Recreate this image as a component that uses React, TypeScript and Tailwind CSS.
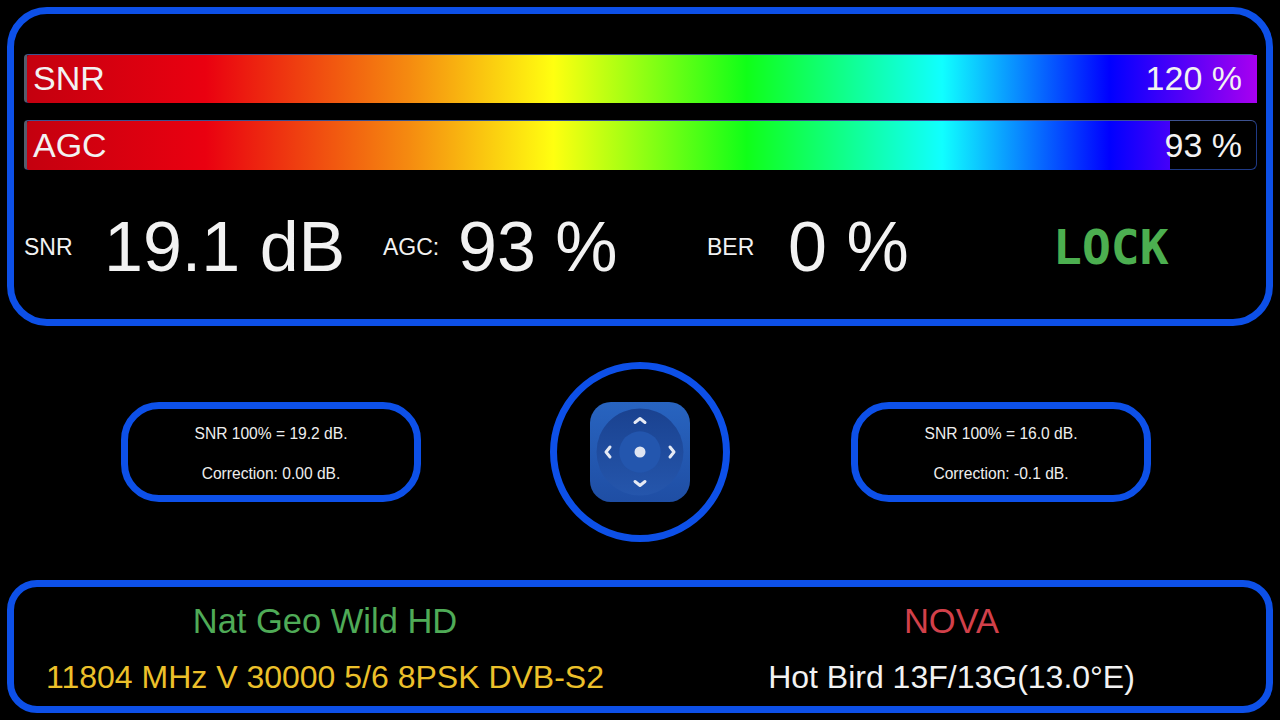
const barGradient =
  'linear-gradient(90deg, #c4000f 0%, #ea0010 14.5%, #f58a10 31%, #ffff10 42.8%, #10ff18 58.5%, #10ffff 74.4%, #0000ff 88%, #a800f0 100%)';

function LevelBar({ label, value, fill }: { label: string; value: string; fill: number }) {
  return (
    <div className={`relative rounded-l-[4px] rounded-r-[6px] border border-[#1f3a86] border-t-[#3d5290] border-l-[3px] border-l-[#555c6c] bg-black ${fill === 100 ? 'h-[49px]' : 'h-[50px]'}`}>
      <div
        className="absolute -bottom-[1px] left-0 top-0 overflow-hidden rounded-l-[2px]"
        style={{ width: `calc(${fill}% + ${fill === 100 ? 1 : 0}px)` }}
      >
        <div className="h-full w-[1230px]" style={{ background: barGradient }} />
      </div>
      <div className="relative flex h-full items-center justify-between pl-[6px] pr-[14px] text-[34px] text-[#f2f2f2]">
        <span>{label}</span>
        <span>{value}</span>
      </div>
    </div>
  );
}

function InfoBox({ lines }: { lines: string[] }) {
  return (
    <div className="flex h-[100px] w-[300px] flex-col items-center justify-center gap-[20px] rounded-[38px] border-[7px] border-[#0d50e8] pt-[4px] text-[15.6px] leading-[20px] text-[#eeeeee]">
      {lines.map((line) => (
        <p key={line}>{line}</p>
      ))}
    </div>
  );
}

function RemoteIcon() {
  return (
    <svg viewBox="0 0 100 100" className="h-[100px] w-[100px]">
      <defs>
        <linearGradient id="tile" x1="0" y1="0" x2="0" y2="1">
          <stop offset="0" stopColor="#2864c0" />
          <stop offset="1" stopColor="#1f4ea4" />
        </linearGradient>
        <linearGradient id="dial" x1="0" y1="0" x2="0" y2="1">
          <stop offset="0" stopColor="#1a4290" />
          <stop offset="1" stopColor="#2556ac" />
        </linearGradient>
      </defs>
      <rect width="100" height="100" rx="21" fill="url(#tile)" />
      <circle cx="50" cy="50" r="43.5" fill="url(#dial)" />
      <circle cx="50" cy="50" r="20.7" fill="#2356ae" />
      <circle cx="50" cy="50" r="5.5" fill="#dfe5f2" />
      <g fill="none" stroke="#e6eaf4" strokeWidth="3" strokeLinecap="round" strokeLinejoin="round">
        <path d="M45 20.5 L50 16.5 L55 20.5" />
        <path d="M45 79.5 L50 83.5 L55 79.5" />
        <path d="M20 45 L16 50 L20 55" />
        <path d="M80 45 L84 50 L80 55" />
      </g>
    </svg>
  );
}

export default function App() {
  return (
    <div className="flex h-[720px] w-[1280px] flex-col bg-black p-[7px] font-['Liberation_Sans',Arial,sans-serif]">
      {/* signal panel */}
      <div className="h-[319px] rounded-[40px] border-[7px] border-[#0d50e8] pl-[10px] pr-[9px] pt-[40px]">
        <div className="flex flex-col gap-[17px]">
          <LevelBar label="SNR" value="120 %" fill={100} />
          <LevelBar label="AGC" value="93 %" fill={93} />
        </div>
        <div className="mt-[37px] flex h-[80px] items-center text-[#f2f2f2]">
          <span className="w-[80px] text-[23px]">SNR</span>
          <span className="w-[279px] text-[70px]">19.1 dB</span>
          <span className="w-[75px] text-[23px]">AGC:</span>
          <span className="w-[249px] text-[70px]">93 %</span>
          <span className="w-[81px] text-[23px]">BER</span>
          <span className="w-[265px] text-[70px]">0 %</span>
          <span className="font-['DejaVu_Sans_Mono',monospace] text-[48px] font-bold text-[#4caf50]">LOCK</span>
        </div>
      </div>

      {/* calibration row */}
      <div className="flex h-[254px] items-center pb-[2px] pl-[114px]">
        <InfoBox lines={['SNR 100% = 19.2 dB.', 'Correction: 0.00 dB.']} />
        <div className="ml-[129px] mr-[121px] flex h-[180px] w-[180px] items-center justify-center rounded-full border-[7px] border-[#0d50e8]">
          <RemoteIcon />
        </div>
        <InfoBox lines={['SNR 100% = 16.0 dB.', 'Correction: -0.1 dB.']} />
      </div>

      {/* channel panel */}
      <div className="grid h-[133px] grid-cols-2 rounded-[30px] border-[7px] border-[#0d50e8] pr-[2px] pt-[14px] text-center">
        <div className="pr-[3px]">
          <p className="text-[34.5px] leading-[40px] text-[#4fab57]">Nat Geo Wild HD</p>
          <p className="mt-[16px] text-[32px] leading-[40px] text-[#ecc02a]">11804 MHz V 30000 5/6 8PSK DVB-S2</p>
        </div>
        <div>
          <p className="text-[34.5px] leading-[40px] text-[#d2404a]">NOVA</p>
          <p className="mt-[16px] text-[32px] leading-[40px] text-[#f2f2f2]">Hot Bird 13F/13G(13.0°E)</p>
        </div>
      </div>
    </div>
  );
}
